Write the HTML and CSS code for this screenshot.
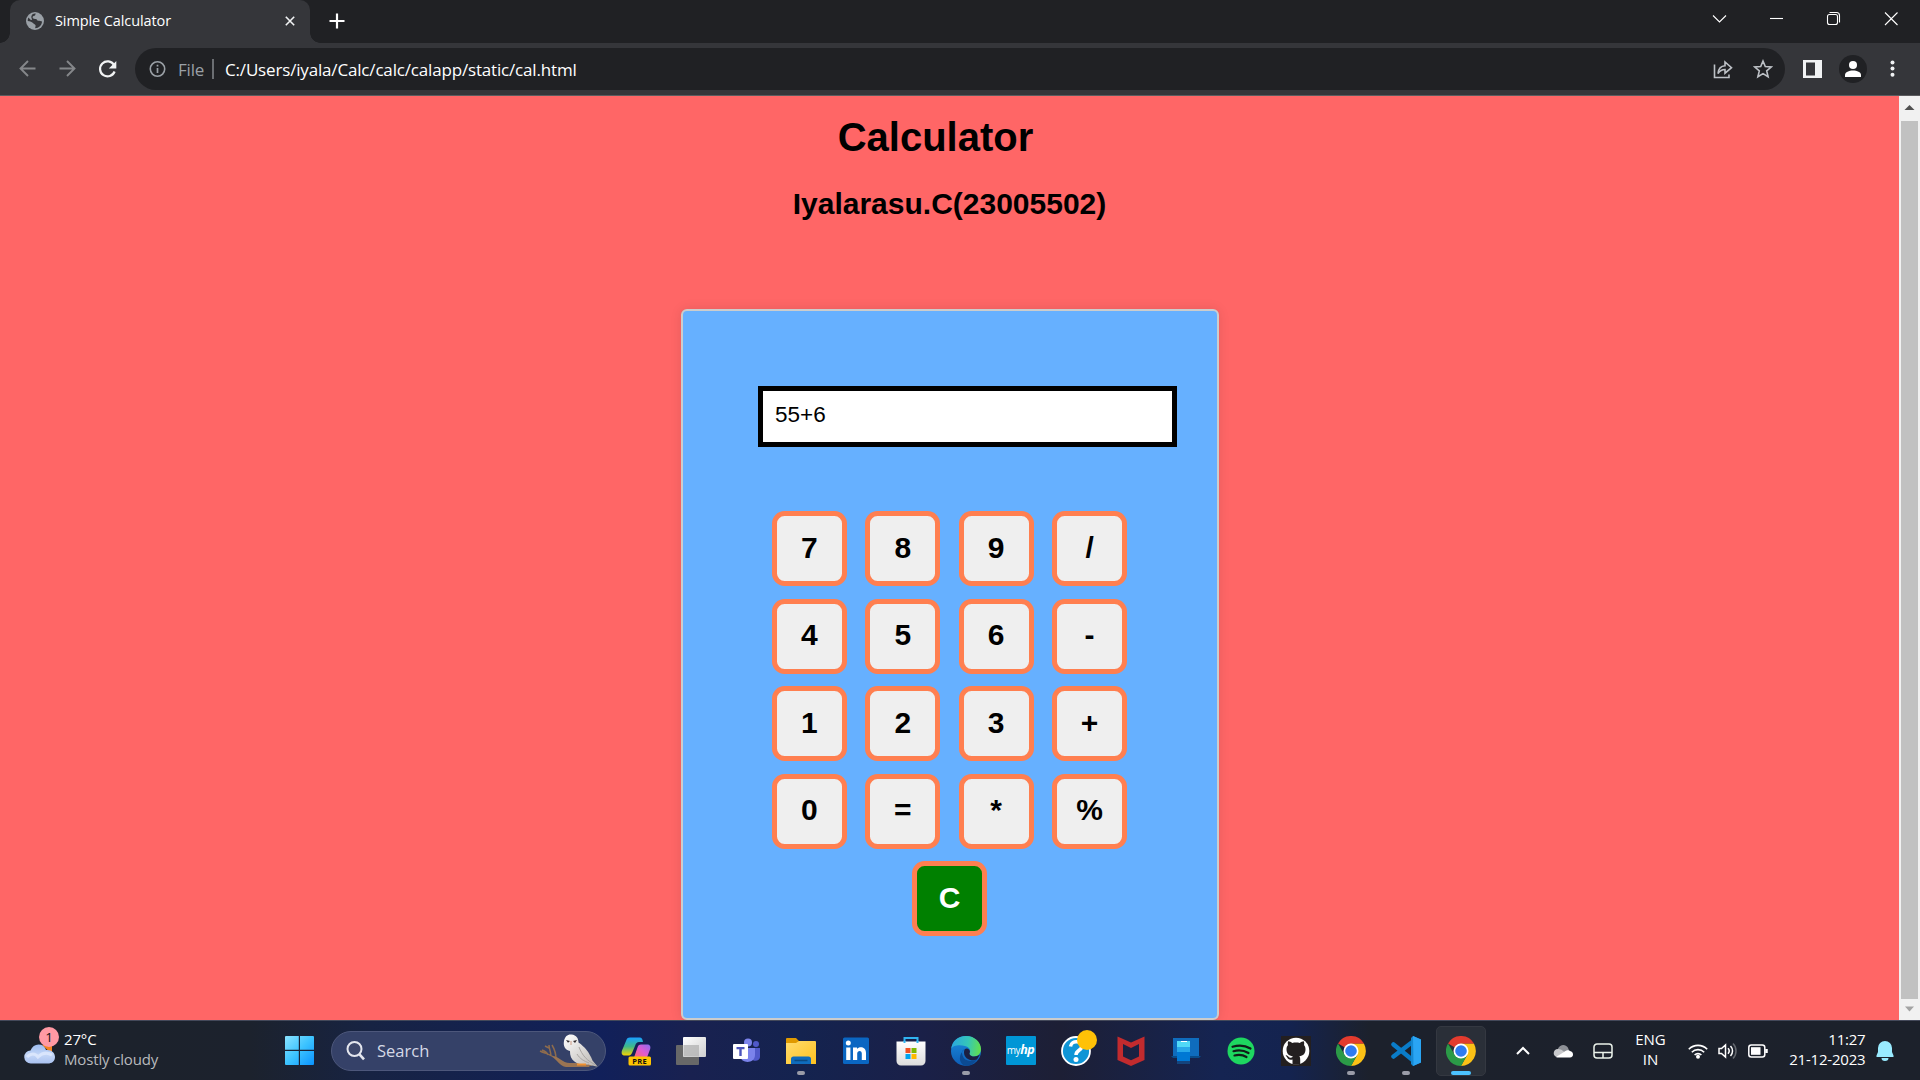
FILE: index.html
```html
<!DOCTYPE html>
<html lang="en">
<head>
<meta charset="utf-8">
<title>Simple Calculator</title>
<link rel="stylesheet" href="styles.css">
</head>
<body>
<svg class="defs" width="0" height="0" aria-hidden="true">
  <defs>
    <linearGradient id="win" x1="0" y1="0" x2="1" y2="1"><stop offset="0" stop-color="#8be3ff"/><stop offset=".5" stop-color="#3cc3ff"/><stop offset="1" stop-color="#0a93ff"/></linearGradient>
    <linearGradient id="cloud" x1="0" y1="0" x2="0" y2="1"><stop offset="0" stop-color="#9dbdf0"/><stop offset=".55" stop-color="#c4d6f7"/><stop offset="1" stop-color="#a9c2f0"/></linearGradient>
    <linearGradient id="copA" x1="0" y1="0" x2="0" y2="1"><stop offset="0" stop-color="#1aa0ff"/><stop offset=".5" stop-color="#3fb98a"/><stop offset="1" stop-color="#f5d400"/></linearGradient>
    <linearGradient id="copB" x1="0" y1="1" x2="1" y2="0"><stop offset="0" stop-color="#ff6a6a"/><stop offset=".5" stop-color="#e05ad0"/><stop offset="1" stop-color="#8b6cf0"/></linearGradient>
    <linearGradient id="fold" x1="0" y1="0" x2="1" y2="1"><stop offset="0" stop-color="#ffdc6e"/><stop offset="1" stop-color="#ffc21f"/></linearGradient>
    <linearGradient id="edgeA" x1="0" y1=".4" x2="1" y2=".5"><stop offset="0" stop-color="#2aa6df"/><stop offset=".55" stop-color="#35c6b8"/><stop offset="1" stop-color="#62e04c"/></linearGradient>
    <linearGradient id="edgeB" x1="0" y1="0" x2="0" y2="1"><stop offset="0" stop-color="#1b8ede"/><stop offset="1" stop-color="#0d5cb5"/></linearGradient>
    <linearGradient id="bag" x1="0" y1="0" x2="0" y2="1"><stop offset="0" stop-color="#fff"/><stop offset="1" stop-color="#dcdcdc"/></linearGradient>
    <linearGradient id="tvA" x1="0" y1="0" x2="1" y2="1"><stop offset="0" stop-color="#fff"/><stop offset="1" stop-color="#cfcfcf"/></linearGradient>
    <linearGradient id="owl" x1="0" y1="0" x2="1" y2="1"><stop offset="0" stop-color="#fff"/><stop offset="1" stop-color="#b9b5b0"/></linearGradient>
    <symbol id="chrome" viewBox="0 0 48 48">
      <path fill="#e33b2e" d="M24 24 3.2 12A24 24 0 0 1 44.8 12L44.8 12.4H24z"/>
      <path fill="#fbc116" d="M24 12.4h20.8A24 24 0 0 1 24 48l10-18z"/>
      <path fill="#2b9a47" d="M3.2 12A24 24 0 0 0 24 48l10.2-18H13.8z"/>
      <circle cx="24" cy="24" r="12" fill="#fff"/><circle cx="24" cy="24" r="9.3" fill="#2f7bf0"/>
    </symbol>
  </defs>
</svg>

<header class="tabstrip">
  <div class="tab">
    <svg class="globe" width="18" height="18" viewBox="0 0 18 18"><circle cx="9" cy="9" r="9" fill="#9aa0a6"/><path fill="#35363a" d="M9.8 1.7c-.9 1-.2 1.6-1.4 2-1.4.5-2.1.9-1.6 2.2.4 1 2 .9 3 1 1.3.2 1.2 1.7 2.4 1.8 1.5.1 2.5.1 3.9.8-.4 3.8-3.2 6.6-6.8 6.8-.4-1 .5-1.7.3-2.8-.2-1.200-1.800-1.600-2.400-2.300C6.400 10.200 4 9.300 1.700 9c-.1-1.200.2-2.500.7-3.500l2.200 2.200c1 .8 1.700-.2 1.200-1C5.100 5.400 5 3.800 6.500 2.200 7.500 1.700 8.800 1.500 9.800 1.700z"/></svg>
    <span class="tab-title">Simple Calculator</span>
    <svg class="tab-close" width="12" height="12" viewBox="0 0 12 12"><path d="M1.800 1.800l8.400 8.400m0-8.400l-8.400 8.400" stroke="#f1f3f4" stroke-width="1.600"/></svg>
  </div>
  <svg class="new-tab" width="16" height="16" viewBox="0 0 16 16"><path d="M8 .5v15M.5 8h15" stroke="#fff" stroke-width="2.200"/></svg>
  <div class="win-controls">
    <svg width="57" height="36" viewBox="0 0 57 36"><path d="M22 15.500l6.500 6.500 6.500-6.500"/></svg>
    <svg width="57" height="36" viewBox="0 0 57 36"><path d="M22 18.500h13"/></svg>
    <svg width="57" height="36" viewBox="0 0 57 36"><rect x="22.500" y="14.500" width="10" height="10" rx="2"/><path d="M24.500 12.500h7a3 3 0 0 1 3 3v7"/></svg>
    <svg width="57" height="36" viewBox="0 0 57 36"><path d="M23 12.500l12.500 12.500m0-12.500L23 25"/></svg>
  </div>
</header>

<nav class="toolbar">
  <svg class="nav-btn dim" width="40" height="30" viewBox="0 0 40 30"><path d="M35.500 14.500H20.500m7.500-7.500L20.500 14.500l7.500 7.500"/></svg>
  <svg class="nav-btn dim" width="40" height="30" viewBox="0 0 40 30"><path d="M19.500 14.500h15M27 7l7.500 7.500L27 22"/></svg>
  <svg class="nav-btn" width="55" height="30" viewBox="0 0 55 30"><path d="M34 11a7.500 7.500 0 1 0 .6 6.500" stroke-width="2.200"/><path d="M36.300 7v7.500h-7.500z" fill="#f1f3f4" stroke="none"/></svg>
  <div class="omnibox">
    <svg width="18" height="18" viewBox="0 0 18 18"><circle cx="9.500" cy="9" r="7.200" fill="none" stroke="#9aa0a6" stroke-width="1.600"/><path d="M9.500 8v5M9.500 4.800v1.700" stroke="#9aa0a6" stroke-width="1.700"/></svg>
    <span class="scheme">File</span>
    <i class="divider"></i>
    <span class="url">C:/Users/iyala/Calc/calc/calapp/static/cal.html</span>
    <svg class="share" width="20" height="20" viewBox="0 0 20 20"><path d="M1.500 5.500v13H16v-3M5 14.500c.5-5 3-7.500 7-7.700V3l6.500 5.700-6.500 5.500v-3.700c-3 0-5 1-7 4z"/></svg>
    <svg class="star" width="20" height="20" viewBox="0 0 20 20"><path d="M10 2l2.300 5.500 5.900.5-4.500 3.900 1.400 5.800-5.100-3.100-5.100 3.100 1.400-5.800L1.800 8l5.900-.5z"/></svg>
  </div>
  <svg class="panel" width="19" height="18" viewBox="0 0 19 18"><path fill="#f1f3f4" fill-rule="evenodd" d="M0 0h19v18H0zM3 2.500v13h9v-13z"/></svg>
  <svg class="avatar" width="28" height="28" viewBox="0 0 28 28"><circle cx="14" cy="14" r="14" fill="#202124"/><circle cx="14" cy="10" r="4" fill="#fff"/><path fill="#fff" d="M6 22v-2c0-3 4-4.600 8-4.600s8 1.600 8 4.600v2z"/></svg>
  <svg class="dots" width="6" height="18" viewBox="0 0 6 18"><g fill="#f1f3f4"><circle cx="3.500" cy="2.500" r="2"/><circle cx="3.500" cy="8.500" r="2"/><circle cx="3.500" cy="14.800" r="2"/></g></svg>
</nav>

<div class="viewport">
  <main class="page">
    <h1>Calculator</h1>
    <h2>Iyalarasu.C(23005502)</h2>
    <section class="calculator">
      <input class="display" type="text" value="55+6" aria-label="Display">
      <div class="keys">
        <button>7</button><button>8</button><button>9</button><button>/</button>
        <button>4</button><button>5</button><button>6</button><button>-</button>
        <button>1</button><button>2</button><button>3</button><button>+</button>
        <button>0</button><button>=</button><button>*</button><button>%</button>
      </div>
      <button class="clear">C</button>
    </section>
  </main>
  <div class="scrollbar">
    <svg width="21" height="25" viewBox="0 0 21 25"><path fill="#505050" d="M5.500 14l5-5 5 5z"/></svg>
    <div class="thumb"></div>
    <svg width="21" height="21" viewBox="0 0 21 21"><path fill="#a3a3a3" d="M6 7.500l4.500 5 4.500-5z"/></svg>
  </div>
</div>

<footer class="taskbar">
  <div class="weather">
    <div class="weather-icon">
      <svg width="32" height="22" viewBox="0 0 32 22"><path d="M18 2h10v9z" fill="#f58220"/><path fill="url(#cloud)" d="M7 20.500a6.500 6.500 0 0 1-.5-13C8 3.500 11 1.500 14.500 1.500c4 0 6.500 2 7.500 5.500 5-.8 9 2.500 9 7s-3.500 6.500-7 6.500z"/><path d="M3 14c4-4 8-4 11 0 4-4 9-5 14-2" fill="none" stroke="#e4edff" stroke-width="3" opacity=".7"/></svg>
      <span class="badge">1</span>
    </div>
    <div class="weather-text"><span>27°C</span><span class="muted">Mostly cloudy</span></div>
  </div>
  <svg class="start" width="29" height="29" viewBox="0 0 29 29"><path fill="url(#win)" d="M1 0h12.800v13.800H0V1a1 1 0 0 1 1-1zM15 0h13a1 1 0 0 1 1 1v12.800H15zM0 15h13.800v14H1a1 1 0 0 1-1-1zM15 15h14v13a1 1 0 0 1-1 1H15z"/></svg>
  <div class="search">
    <svg width="20" height="20" viewBox="0 0 20 20"><circle cx="8.500" cy="8" r="7" fill="#3d476b" stroke="#e4e6ee" stroke-width="2"/><path d="M13.500 13.300l4.500 5" stroke="#e4e6ee" stroke-width="2.600"/></svg>
    <span>Search</span>
    <svg class="owl" width="60" height="34" viewBox="0 0 60 34">
      <path d="M1 17c6 3 11 3 16 8 4 4 8 6 14 6h22M9 21c-1-3-3-4-6-5M12 22c0-4-2-7-2-11M17 25c0-5-1-9-4-14M10 14l-4-2" fill="none" stroke="#8d6b4d" stroke-width="1.500"/>
      <path d="M13 22c7 0 10 7 18 7h22l-3 4H27c-6-1-9-7-14-11z" fill="#9a7452"/>
      <path fill="url(#owl)" d="M31 17c-5-1-7-5-6-10C26 2 29 0 32.500.5 37.500 1 39.500 4.500 39.500 8.500c6 4 11 10 14 18l5 6c-6-1-9-2-11-2-8 1-17-3-16.500-13.500z"/>
      <path d="M40 13c3 8 8 14 17 18M38 20c3 5 7 7 12 9" fill="none" stroke="#a9a5a2" stroke-width="1"/>
      <path fill="#30292b" d="M27 6l4 1-2 1.700zM34 7l4-1-2 3z"/><path d="M32 7v4" stroke="#d8b6a6" stroke-width="1.500"/><path d="M38 29.500h9v2h-9z" fill="#f0902f"/>
    </svg>
  </div>
  <div class="apps">
    <div class="app"><svg width="30" height="30" viewBox="0 0 30 30"><path fill="url(#copA)" d="M9 1.500h9.500c2.500 0 3 2 3.500 4.500h-4c-2 0-3 1-4 4l-3 7c-1 2-2 2.500-4 2.500H4c-3 0-4-2-3-5L5 5c.7-2.500 1.700-3.500 4-3.500z"/><path fill="url(#copB)" d="M20 8.500h6c3 0 4 2 3 5l-3 8H13l3.500-10c.6-2 1.500-3 3.500-3z"/><rect x="7.500" y="20.500" width="22.500" height="9" rx="1.500" fill="#ffc400"/><text x="18.700" y="28" text-anchor="middle" class="pre">PRE</text></svg></div>
    <div class="app"><svg width="30" height="30" viewBox="0 0 30 30"><rect y="9" width="23" height="20" rx="1" fill="#686868"/><rect x="7" y="1" width="23" height="20" rx="1" fill="url(#tvA)"/><path fill="#b4b4b4" opacity=".8" d="M7.500 9H23v11.500H7.500z"/></svg></div>
    <div class="app"><svg width="30" height="30" viewBox="0 0 30 30"><circle cx="17" cy="6.500" r="4" fill="#7b83eb"/><circle cx="25" cy="8" r="3" fill="#5059c9"/><path fill="#5059c9" d="M20 12h9v9c0 4-6 5-9 2z"/><path fill="#7b83eb" d="M9 12h15v7c0 9-14 9-15 1z"/><rect x="2" y="8" width="15" height="15" rx="1" fill="#fff"/><path fill="#4b53bc" d="M5.500 11h8v2.200h-2.800V20H8.300v-6.800H5.500z"/></svg></div>
    <div class="app running"><svg width="30" height="30" viewBox="0 0 30 30"><path fill="#e09a00" d="M1 2h9l3 3h16v6H0V3a1 1 0 0 1 1-1z"/><path fill="url(#fold)" d="M0 7h10l3-2h16a1 1 0 0 1 1 1v22H0z"/><path fill="#0f6cbd" d="M5 28v-5a2.500 2.500 0 0 1 2.500-2.500h15A2.500 2.500 0 0 1 25 23v5z"/><path d="M8.500 24.500h13" stroke="#0b4a82" stroke-width="1.500"/></svg></div>
    <div class="app"><svg width="30" height="30" viewBox="0 0 30 30"><rect x="2" y="1.500" width="26" height="26.500" rx="1.500" fill="#0a66c2"/><g fill="#fff"><circle cx="7.300" cy="7" r="2.500"/><path d="M5.200 11.500h4.200V24H5.200zM12 11.500h4V13c2-2.800 9-2.700 9 4v7h-4.200v-6.500c0-3.500-4.600-3.200-4.600 0V24H12z"/></g></svg></div>
    <div class="app"><svg width="30" height="30" viewBox="0 0 30 30"><path d="M8.500 7V2h13v5" fill="none" stroke="#30b4f0" stroke-width="2"/><path fill="url(#bag)" d="M.5 5.500h29V25a4.500 4.500 0 0 1-4.500 4.500H5A4.500 4.500 0 0 1 .5 25z"/><path d="M8.500 5v2M21.500 5v2" stroke="#30b4f0" stroke-width="2"/><path fill="#f25022" d="M9.500 12h5v5h-5z"/><path fill="#7fba00" d="M15.500 12h5v5h-5z"/><path fill="#00a4ef" d="M9.500 18h5v5h-5z"/><path fill="#ffb900" d="M15.500 18h5v5h-5z"/></svg></div>
    <div class="app running"><svg width="30" height="30" viewBox="0 0 30 30"><circle cx="15" cy="15" r="15" fill="url(#edgeB)"/><path fill="url(#edgeA)" d="M.2 13C1 5 7 0 15 0c9 0 15 6.500 15 13 0 5-3.500 7.500-7.500 7.500-3.500 0-5-1.500-4-3 2-3.500-.5-6.500-4.500-7.500C9 8.800 2 9 .2 13z"/><path fill="#0b4a92" d="M11 16c0 8 7 11 15 7.500-3 4.500-7 6.500-11 6.500-8-2-8-12-1-17-2 1-3 2-3 3z"/><path fill="#1c2042" d="M14 13c2-1.500 5 0 5 3-1.500 2 .5 4.500 4 4.500 2.500 0 4-.7 6-2l-3 5c-6 2.500-13-1-13-7 0-1.500.3-2.500 1-3.500z"/></svg></div>
    <div class="app"><div class="myhp">my<b>hp</b></div></div>
    <div class="app help"><svg width="30" height="30" viewBox="0 0 30 30"><circle cx="15" cy="15" r="14" fill="#0f95d6" stroke="#fff" stroke-width="1.800"/><path d="M9.500 10.500c1-7 12.500-6 11 1-.8 3-5.500 3-5.500 7.500" fill="none" stroke="#fff" stroke-width="3.500"/><circle cx="15" cy="23.500" r="2.500" fill="#fff"/></svg><i class="alert"></i></div>
    <div class="app"><svg width="30" height="30" viewBox="0 0 30 30"><path fill="#c22b2e" d="M1.500.5L15 6.500l13.500-6V24L15 30 1.500 24zM7 8v12.500l8 3.800 8-3.800V8l-8 4z" fill-rule="evenodd"/></svg></div>
    <div class="app"><svg width="30" height="30" viewBox="0 0 30 30"><path fill="#0f6cbd" d="M2 2h26v19H2z"/><path fill="#084c8b" d="M0 20h30l-2 2H2z"/><path fill="#50d9f7" d="M6 5h13v10H6z"/><path fill="#28a8ea" d="M6 11h13v9H6z"/><path fill="#0078d4" d="M6 16h13v9H6z"/><path fill="#14447d" d="M6 25h13v3H6z"/><path fill="#fff" d="M10 5h6v1h-6z"/></svg></div>
    <div class="app"><svg width="30" height="30" viewBox="0 0 30 30"><circle cx="15" cy="15" r="13.500" fill="#1ed760"/><path d="M6.500 10.800c6-1.800 13-1.200 18 1.700M7.500 15.200c5-1.400 10.500-.8 15 1.800M8.500 19.500c4-1 8.500-.6 12 1.500" fill="none" stroke="#101c18" stroke-width="2.200" stroke-linecap="round"/></svg></div>
    <div class="app"><svg width="30" height="30" viewBox="0 0 30 30"><path fill="#231f20" d="M0 0h30v30H0z"/><circle cx="15" cy="15" r="13.300" fill="#fff"/><path fill="#231f20" d="M11.500 28.500v-5c-3 .8-4.500-.2-5.500-2.500-.4-1-2-1.500-1-1.800 2-.5 2.500 3 5 2.500.8-.2 1.500-.5 1.700-1.500-4-.6-6.200-2.700-6.200-7 0-1.900.6-3 1.500-4.200-.3-1-.3-2.400.2-3.700 1.500 0 2.800.8 4 1.600 2.400-.6 5.200-.6 7.600 0 1.200-.8 2.500-1.600 4-1.600.5 1.300.5 2.700.2 3.700.9 1.200 1.500 2.300 1.500 4.200 0 4.300-2.200 6.400-6.200 7 .8 1 .9 2 .9 3.300v5z"/></svg></div>
    <div class="app running"><svg width="30" height="30"><use href="#chrome"/></svg></div>
    <div class="app running"><svg width="30" height="30" viewBox="0 0 30 30"><path d="M2.500 8.500L24 26M2.500 20.500L24 4" stroke="#0a7cc8" stroke-width="4.500" stroke-linecap="round"/><path fill="#1588d2" d="M22 0l8 3.500v23L22 30l-2-2V2z"/><path fill="#2aa5f4" d="M22 0l8 3.500v23L22 30l.5-2z"/></svg></div>
    <div class="app active"><svg width="30" height="30"><use href="#chrome"/></svg></div>
  </div>
  <div class="tray">
    <svg class="caret" width="14" height="9" viewBox="0 0 14 9"><path d="M1 8l6-6 6 6" fill="none" stroke="#fff" stroke-width="2"/></svg>
    <svg class="drive" width="20" height="14" viewBox="0 0 20 14"><path fill="#8d9096" d="M5 8a5.200 5.200 0 0 1 10.500-3L17 9H5z"/><path fill="#c8c9cc" d="M4 13C-1 12 0 5 5 5c4 0 6 3 10 6z"/><path fill="#fff" d="M3 13l8-5c2-2 5-2.500 6-1 4 .5 4 6.500 0 6.500H4z"/></svg>
    <svg class="pad" width="20" height="16" viewBox="0 0 20 16"><path d="M4 1h12a3 3 0 0 1 3 3v8a3 3 0 0 1-3 3H4a3 3 0 0 1-3-3V4a3 3 0 0 1 3-3zM1 9.500h18M10 9.500V15" fill="none" stroke="#eaf2ea" stroke-width="1.500"/></svg>
    <div class="lang"><span>ENG</span><span>IN</span></div>
    <svg class="wifi" width="20" height="16" viewBox="0 0 20 16"><path d="M.8 6.200a13 13 0 0 1 18.400 0M3.800 9.200a8.800 8.800 0 0 1 12.400 0M6.600 12a4.800 4.800 0 0 1 6.800 0" fill="none" stroke="#fff" stroke-width="1.600"/><circle cx="10" cy="13.700" r="2" fill="#fff"/></svg>
    <svg class="sound" width="20" height="18" viewBox="0 0 20 18"><path d="M1 6.500h2.500L7.500 3v12l-4-3.500H1zM10 6.300a4 4 0 0 1 0 5.400M12.500 4a7.200 7.200 0 0 1 0 10" fill="none" stroke="#fff" stroke-width="1.500"/><path d="M15 1.500c4 4 4 11 0 15" fill="none" stroke="#64686f" stroke-width="1.500"/></svg>
    <svg class="battery" width="20" height="14" viewBox="0 0 20 14"><rect x=".8" y="1" width="16" height="12" rx="2.500" fill="none" stroke="#fff" stroke-width="1.500"/><rect x="3" y="3.200" width="9.500" height="7.600" fill="#fff"/><path d="M18.500 5v4" stroke="#fff" stroke-width="2.500"/></svg>
    <div class="clock"><span>11:27</span><span>21-12-2023</span></div>
    <svg class="bell" width="18" height="20" viewBox="0 0 18 20"><path fill="#99ebff" d="M9 0a7 7 0 0 1 7 7v4l1.500 3.500V16H.5v-1.500L2 11V7a7 7 0 0 1 7-7zM5.500 17h7a3.500 3 0 0 1-7 0z"/></svg>
  </div>
</footer>
</body>
</html>
```

FILE: styles.css
```css
* { box-sizing: border-box; }
body {
  margin: 0;
  width: 1920px;
  height: 1080px;
  overflow: hidden;
  display: flex;
  flex-direction: column;
  font-family: "Open Sans", "Noto Sans", sans-serif;
  color: #fff;
}
svg { display: block; flex: none; }
.defs { position: absolute; }

/* Browser tab strip */
.tabstrip {
  height: 43px;
  flex: none;
  display: flex;
  align-items: flex-start;
  padding-left: 10px;
  background: #202124;
}
.tab {
  position: relative;
  width: 300px;
  height: 43px;
  padding: 0 14px 2px 16px;
  display: flex;
  align-items: center;
  background: #35363a;
  border-radius: 10px 10px 0 0;
}
.tab::before, .tab::after {
  content: "";
  position: absolute;
  bottom: 0;
  width: 10px;
  height: 10px;
}
.tab::before { left: -10px; background: radial-gradient(circle at 0 0, #202124 9.500px, #35363a 10px); }
.tab::after { right: -10px; background: radial-gradient(circle at 100% 0, #202124 9.500px, #35363a 10px); }
.tab-title { margin-left: 11px; font-size: 14.500px; line-height: 20px; letter-spacing: -0.1px; white-space: nowrap; }
.tab-close { margin-left: auto; }
.new-tab { margin: 13px 0 0 19px; }
.win-controls { display: flex; margin-left: auto; padding-right: 1px; }
.win-controls svg { fill: none; stroke: #fff; stroke-width: 1.100px; }

/* Toolbar */
.toolbar {
  height: 53px;
  flex: none;
  display: flex;
  align-items: center;
  background: #35363a;
  border-bottom: 1px solid #5b5c5f;
}
.nav-btn { fill: none; stroke: #f1f3f4; stroke-width: 1.900px; }
.nav-btn.dim { stroke: #85878a; }
.omnibox {
  width: 1650px;
  height: 42px;
  border-radius: 21px;
  background: #202124;
  display: flex;
  align-items: center;
  padding: 0 12px 0 13px;
  font-size: 17px;
}
.scheme { margin-left: 12px; width: 34px; color: #9aa0a6; letter-spacing: -0.2px; }
.divider { width: 2px; height: 20px; background: #6b6e72; }
.url { margin-left: 11px; letter-spacing: -0.170px; white-space: nowrap; }
.share { margin-left: auto; }
.star { margin-left: 20px; }
.share, .star { fill: none; stroke: #bdc1c6; stroke-width: 1.600px; }
.panel { margin-left: 18px; }
.avatar { margin-left: 17px; }
.dots { margin-left: 22px; }

/* Web page */
.viewport { height: 924px; flex: none; display: flex; }
.page {
  width: 1899px;
  display: flex;
  flex-direction: column;
  align-items: center;
  background: #f66;
  font-family: "Liberation Sans", Arial, sans-serif;
  color: #000;
}
h1, h2 { margin: 0; font-weight: bold; white-space: nowrap; }
h1 { margin-top: 18px; padding-right: 28px; font-size: 40px; line-height: 46px; }
h2 { margin-top: 27px; font-size: 30px; line-height: 34px; }
.calculator {
  width: 538px;
  height: 711px;
  margin-top: 88px;
  padding-top: 75px;
  display: flex;
  flex-direction: column;
  align-items: center;
  background: #66b0ff;
  border: 2px solid #ccc;
  border-radius: 6px;
  box-shadow: 0 0 12px rgba(0, 0, 0, 0.1);
}
.display {
  width: 419px;
  height: 61px;
  margin-left: 36px;
  padding: 0 12px 4px;
  border: 5px solid #000;
  border-radius: 0;
  background: #fff;
  font: 22.500px "Liberation Sans", Arial, sans-serif;
  color: #000;
}
.keys {
  margin-top: 64px;
  display: grid;
  grid-template-columns: repeat(4, 75px);
  gap: 12.500px 18.400px;
}
.calculator button {
  width: 75px;
  height: 75px;
  padding: 0 0 2px;
  border: 5px solid coral;
  border-radius: 12.500px;
  background: #efefef;
  color: #000;
  font: bold 30px "Liberation Sans", Arial, sans-serif;
}
.calculator .clear { margin-top: 12.500px; background: green; color: #fff; }
.scrollbar { width: 21px; background: #f1f1f1; display: flex; flex-direction: column; align-items: center; }
.thumb { width: 17px; flex: 1; background: #c1c1c1; }

/* Taskbar */
.taskbar {
  height: 60px;
  flex: none;
  display: flex;
  align-items: center;
  border-top: 1px solid #44495a;
  background: linear-gradient(90deg, #1c222b 0, #1c222d 250px, #172343 370px, #11205a 600px, #192150 690px, #14234f 800px, #1a2048 920px, #1d1f35 1060px, #152452 1220px, #14234f 1290px, #1c212c 1370px, #1c212b 100%);
  font-size: 15px;
  line-height: 20px;
}
.weather { width: 285px; padding: 0 0 3px 24px; display: flex; align-items: center; }
.weather-icon { position: relative; width: 40px; height: 44px; padding-top: 16px; }
.badge {
  position: absolute;
  left: 15px;
  top: 0;
  width: 20px;
  height: 20px;
  border-radius: 50%;
  background: #ff99a4;
  color: #111;
  font-size: 13.500px;
  text-align: center;
}
.weather-text, .lang, .clock { display: flex; flex-direction: column; padding-bottom: 3px; }
.weather-text { padding-bottom: 0; letter-spacing: -0.150px; }
.muted { color: #b8babd; }
.search {
  width: 275px;
  height: 40px;
  margin-left: 17px;
  padding: 0 6px 0 14px;
  display: flex;
  align-items: center;
  border: 1px solid #4d577b;
  border-radius: 20px;
  background: #354168;
  font-size: 16.500px;
  color: #d5d9e6;
}
.search span { margin-left: 11px; }
.owl { margin-left: auto; }
.apps { display: flex; margin-left: 2px; }
.app { position: relative; width: 55px; height: 50px; display: flex; align-items: center; justify-content: center; }
.running::after, .active::after {
  content: "";
  position: absolute;
  bottom: 1px;
  left: 23.500px;
  width: 8px;
  height: 4px;
  border-radius: 2px;
  background: #9a9ca8;
}
.active { width: 50px; margin-left: 2.500px; border: 1px solid #343841; border-radius: 5px; background: #2a2f38; }
.active::after { left: 14px; bottom: 0; width: 20px; background: #4cc2ff; }
.pre { font: bold 7.500px "Open Sans", sans-serif; letter-spacing: 0.4px; fill: #111; }
.myhp { width: 30px; height: 29px; border-radius: 1px; background: #0096d6; font-size: 10px; line-height: 28px; text-align: center; letter-spacing: -0.5px; }
.myhp b { font-size: 12.500px; font-style: italic; }
.alert { position: absolute; left: 29px; top: 4px; width: 20px; height: 20px; border-radius: 50%; background: #ffc107; }
.tray { display: flex; align-items: center; margin-left: 30px; }
.drive { margin-left: 23px; }
.pad { margin-left: 20px; }
.lang { width: 40px; margin-left: 18px; text-align: center; }
.wifi { margin-left: 17px; }
.sound { margin-left: 10px; }
.battery { margin-left: 10px; }
.clock { width: 98px; text-align: right; letter-spacing: -0.2px; }
.bell { margin-left: 10px; }
```
